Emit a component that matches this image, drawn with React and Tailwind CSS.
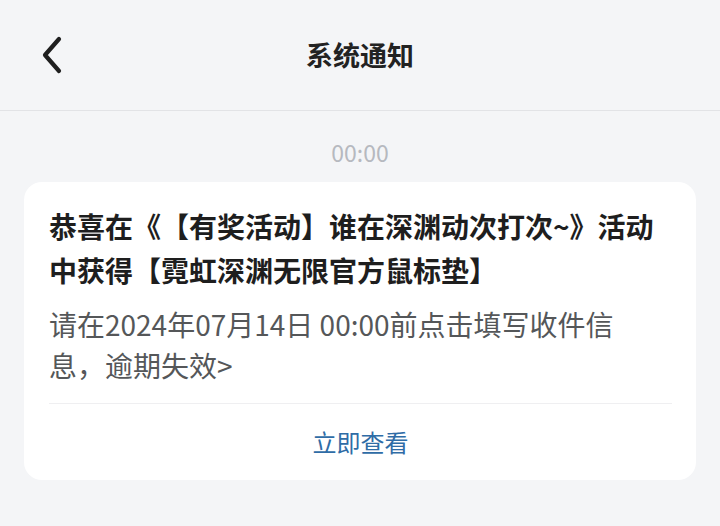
import React from "react";

const FONT = { fontFamily: '"Noto Sans CJK SC", "Noto Sans", sans-serif' };

const BackIcon = () => (
  <svg width="24" height="38" viewBox="0 0 24 38" fill="none">
    <polyline
      points="19,3 5,19 19,35"
      stroke="#1f1f1f"
      strokeWidth="4.2"
      strokeLinecap="round"
      strokeLinejoin="round"
    />
  </svg>
);

export default function App() {
  return (
    <div
      className="w-[720px] h-[526px] bg-[#f4f5f7] flex flex-col overflow-hidden [text-spacing-trim:space-all]"
      style={FONT}
    >
      {/* Header */}
      <div className="h-[111px] flex items-center relative border-b border-[#e2e3e6] shrink-0">
        <button className="absolute left-[40px] top-[36px]">
          <BackIcon />
        </button>
        <h1 className="w-full text-center text-[27px] font-bold text-[#222]">
          系统通知
        </h1>
      </div>

      {/* Time */}
      <div className="text-center text-[23px] leading-[30px] text-[#b6b9bf] mt-[26px]">
        00:00
      </div>

      {/* Card */}
      <div className="mx-[24px] mt-[15px] bg-white rounded-[18px] pl-[25px] pr-[24px]">
        <div className="pt-[22px] text-[28px] leading-[44px] font-bold text-[#1e1e1e]">
          恭喜在《【有奖活动】谁在深渊动次打次~》活动
          <br />
          中获得【霓虹深渊无限官方鼠标垫】
        </div>
        <div className="mt-[12px] text-[28px] leading-[41px] text-[#555759]">
          请在2024年07月14日 00:00前点击填写收件信
          <br />
          息，逾期失效&gt;
        </div>
        <div className="mt-[17px] border-t border-[#efeff1]" />
        <div className="h-[76px] flex items-center justify-center text-[24px] text-[#2f6ca6]">
          立即查看
        </div>
      </div>
    </div>
  );
}
